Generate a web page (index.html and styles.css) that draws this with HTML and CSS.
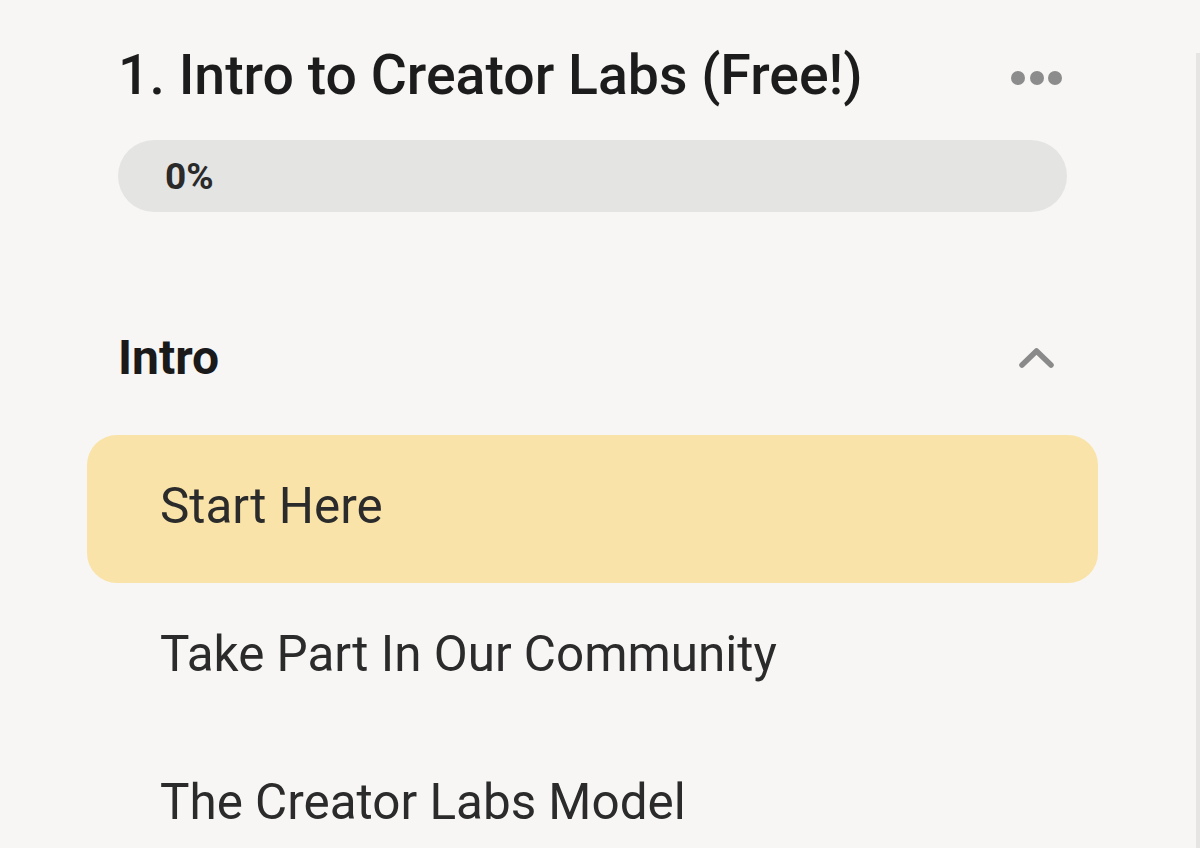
FILE: index.html
```html
<!DOCTYPE html>
<html lang="en">
<head>
<meta charset="utf-8">
<title>Intro to Creator Labs</title>
<link rel="stylesheet" href="styles.css">
</head>
<body>
<aside class="panel">
  <div class="course-head">
    <h1 class="course-title">1. Intro to Creator Labs (Free!)</h1>
    <svg class="icon-dots" width="56" height="20" viewBox="0 0 56 20" aria-hidden="true">
      <circle cx="7" cy="10" r="7"/>
      <circle cx="26" cy="10" r="7"/>
      <circle cx="44" cy="10" r="7"/>
    </svg>
  </div>
  <div class="progress"><span class="progress-label">0%</span></div>

  <div class="section-head">
    <h2 class="section-title">Intro</h2>
    <svg class="icon-chevron" width="49" height="24" viewBox="0 0 49 24" aria-hidden="true">
      <polyline points="4,19 18.5,5 33,19"/>
    </svg>
  </div>
  <ul class="lessons">
    <li class="lesson lesson-active">Start Here</li>
    <li class="lesson">Take Part In Our Community</li>
    <li class="lesson">The Creator Labs Model</li>
  </ul>
  <div class="scrollbar"></div>
</aside>
</body>
</html>
```
FILE: styles.css
```css
html, body {
  margin: 0;
  padding: 0;
  height: 100%;
}
body {
  background: #f7f6f4;
  font-family: Roboto, "Liberation Sans", Arial, sans-serif;
  color: #1f1f1f;
  overflow: hidden;
}
.panel {
  position: relative;
  padding: 42px 133px 0 118px;
  min-height: 100%;
  box-sizing: border-box;
}
.course-head {
  display: flex;
  align-items: center;
  justify-content: space-between;
}
.course-title {
  margin: 0;
  font-size: 55.4px;
  line-height: 67px;
  font-weight: 500;
  color: #1c1c1c;
}
.icon-dots {
  fill: #8c8c8c;
  margin-top: 4px;
}
.progress {
  margin-top: 31px;
  height: 72px;
  border-radius: 36px;
  background: #e4e4e3;
  display: flex;
  align-items: center;
  padding-left: 47px;
}
.progress-label {
  font-size: 37px;
  font-weight: 700;
  color: #2a2a2a;
}
.section-head {
  margin-top: 118px;
  display: flex;
  align-items: center;
  justify-content: space-between;
}
.section-title {
  margin: 0;
  font-size: 48px;
  line-height: 55px;
  font-weight: 700;
  color: #1a1a1a;
}
.icon-chevron {
  fill: none;
  stroke: #8a8a8a;
  stroke-width: 5.5;
  stroke-linecap: round;
  stroke-linejoin: round;
}
.lessons {
  list-style: none;
  margin: 50px -31px 0 -31px;
  padding: 0;
}
.lesson {
  height: 148px;
  display: flex;
  align-items: center;
  padding-left: 73px;
  padding-bottom: 6px;
  box-sizing: border-box;
  font-size: 49.4px;
  color: #2b2b2b;
  border-radius: 30px;
}
.lesson-active {
  background: #f9e3a8;
}
.scrollbar {
  position: absolute;
  right: 0;
  top: 53px;
  bottom: 0;
  width: 4px;
  background: #e6e5e3;
}
```
